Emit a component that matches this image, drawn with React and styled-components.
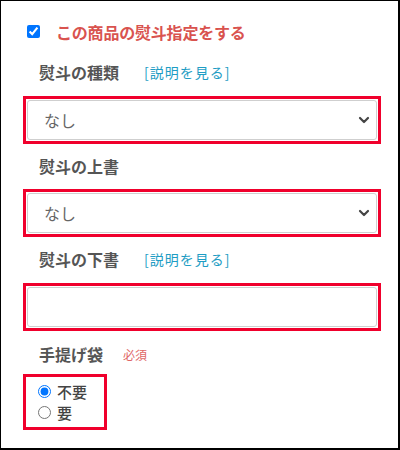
import React from "react";
import styled, { createGlobalStyle } from "styled-components";

const Global = createGlobalStyle`
  html, body { margin: 0; padding: 0; background: #fff; }
  body { font-family: "Noto Sans CJK JP", "Noto Sans", sans-serif; }
  * { box-sizing: border-box; }
`;

const Panel = styled.div`
  width: 400px;
  height: 450px;
  border-style: solid;
  border-color: #000;
  border-width: 1px 2px 2px 1px;
  padding: 19px 17px 0 22px;
  display: flex;
  flex-direction: column;
  background: #fff;
`;

const CheckRow = styled.label`
  display: flex;
  align-items: center;
  gap: 16px;
  height: 24px;
  padding-left: 4px;
  font-size: 16px;
  font-weight: 700;
  color: #d9534f;
  line-height: 24px;
  letter-spacing: -0.2px;

  input {
    width: 13px;
    height: 13px;
    margin: 0;
    position: relative;
    top: -1px;
  }
`;

const LabelRow = styled.div`
  display: flex;
  align-items: center;
  height: 24px;
  margin-top: ${(p) => p.$mt ?? 10}px;
  padding-left: 16px;
`;

const FieldLabel = styled.span`
  font-size: 16px;
  font-weight: 700;
  color: #555;
  line-height: 24px;
`;

const HelpLink = styled.a`
  margin-left: 25px;
  font-size: 14px;
  letter-spacing: 1px;
  color: #1e9dc4;
  text-decoration: none;
  cursor: pointer;
`;

const Required = styled.span`
  margin-left: 20px;
  font-size: 12px;
  color: #e06666;
`;

const Highlight = styled.div`
  border: 3px solid #f0002c;
  padding: 1px;
  margin-top: ${(p) => p.$mt ?? 11}px;
  width: ${(p) => p.$w || "auto"};
`;

const SelectWrap = styled.div`
  position: relative;
  display: flex;
`;

const Select = styled.select`
  appearance: none;
  -webkit-appearance: none;
  width: 100%;
  height: 40px;
  border: 1px solid #cfcfcf;
  border-radius: 3px;
  background: #fff;
  padding: 0 30px 0 16px;
  font-family: inherit;
  font-size: 16px;
  color: #666;
  outline: none;
`;

const Chevron = styled.svg`
  position: absolute;
  right: 7px;
  top: 50%;
  transform: translateY(-50%);
  pointer-events: none;
`;

const TextInput = styled.input`
  width: 100%;
  height: 40px;
  border: 1px solid #cfcfcf;
  border-radius: 3px;
  background: #fff;
  display: block;
`;

const RadioGroup = styled.div`
  display: flex;
  flex-direction: column;
  padding: 3px 0 3px 11px;
`;

const RadioRow = styled.label`
  display: flex;
  align-items: center;
  gap: 6px;
  height: 21px;
  line-height: 21px;
  font-size: 15px;
  font-weight: 500;
  color: #444;

  input {
    width: 13px;
    height: 13px;
    margin: 0;
  }
`;

function SelectBox() {
  return (
    <SelectWrap>
      <Select defaultValue="none">
        <option value="none">なし</option>
      </Select>
      <Chevron width="12" height="8" viewBox="0 0 12 8">
        <path d="M2 2 L6 6 L10 2" fill="none" stroke="#444" strokeWidth="2.2" strokeLinecap="round" strokeLinejoin="round" />
      </Chevron>
    </SelectWrap>
  );
}

export default function App() {
  return (
    <>
      <Global />
      <Panel>
        <CheckRow>
          <input type="checkbox" defaultChecked />
          この商品の熨斗指定をする
        </CheckRow>

        <LabelRow $mt={16}>
          <FieldLabel>熨斗の種類</FieldLabel>
          <HelpLink>[説明を見る]</HelpLink>
        </LabelRow>
        <Highlight $mt={12}>
          <SelectBox />
        </Highlight>

        <LabelRow>
          <FieldLabel>熨斗の上書</FieldLabel>
        </LabelRow>
        <Highlight>
          <SelectBox />
        </Highlight>

        <LabelRow>
          <FieldLabel>熨斗の下書</FieldLabel>
          <HelpLink>[説明を見る]</HelpLink>
        </LabelRow>
        <Highlight $mt={12}>
          <TextInput type="text" />
        </Highlight>

        <LabelRow $mt={11}>
          <FieldLabel>手提げ袋</FieldLabel>
          <Required>必須</Required>
        </LabelRow>
        <Highlight $mt={8} $w="84px">
          <RadioGroup>
            <RadioRow>
              <input type="radio" name="bag" defaultChecked />
              不要
            </RadioRow>
            <RadioRow>
              <input type="radio" name="bag" />
              要
            </RadioRow>
          </RadioGroup>
        </Highlight>
      </Panel>
    </>
  );
}
